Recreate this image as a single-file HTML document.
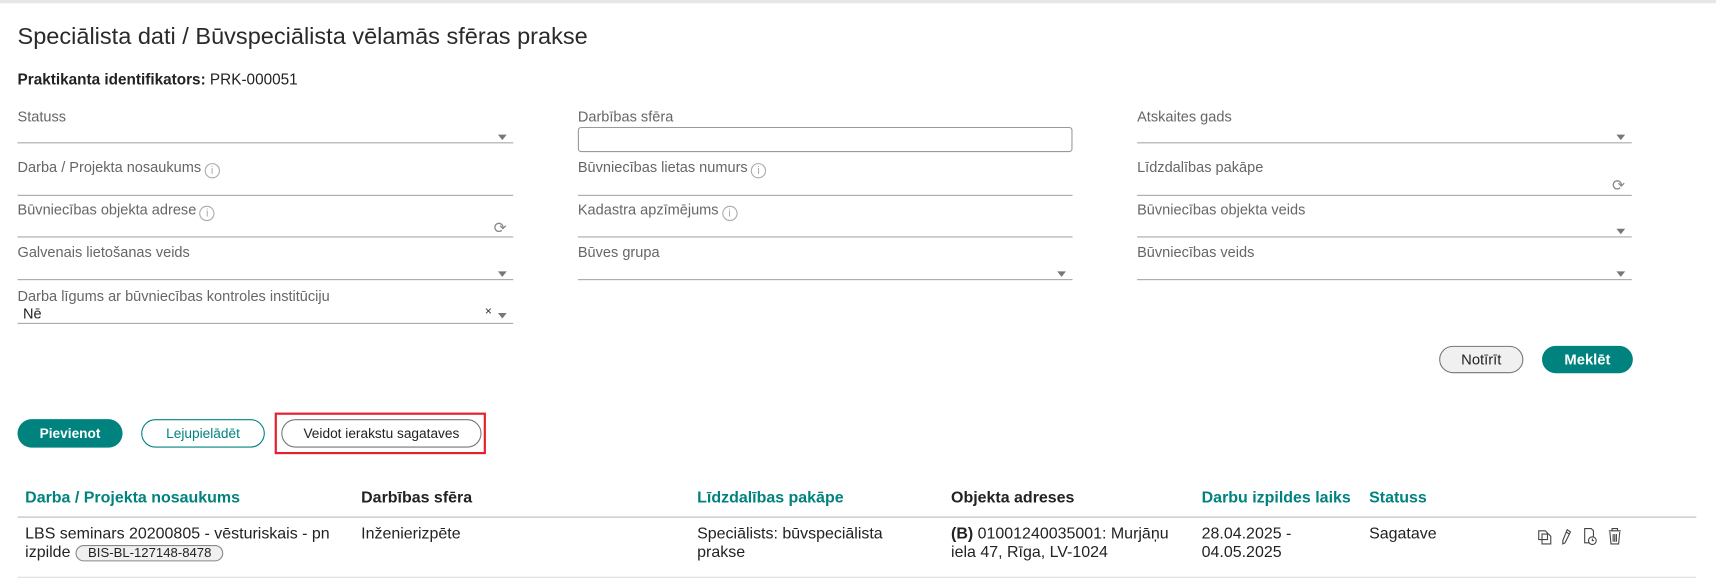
<!DOCTYPE html>
<html><head><meta charset="utf-8">
<style>
html,body{margin:0;padding:0;background:#fff;overflow:hidden;width:1716px;height:578px}
#w{position:absolute;left:0;top:0;width:1568px;height:528px;transform:scale(1.0944);transform-origin:0 0;font-family:"Liberation Sans",Arial,sans-serif;color:#222}
.a{position:absolute;white-space:nowrap}
.lbl{position:absolute;font-size:13.3px;color:#666;line-height:16px;white-space:nowrap}
.ln{position:absolute;height:1px;background:#a8a8a8}
.arr{position:absolute;width:0;height:0;border-left:4px solid transparent;border-right:4px solid transparent;border-top:5px solid #777}
.info{display:inline-block;width:14px;height:14px;border:1px solid #aaa;border-radius:50%;font-size:10px;line-height:13px;text-align:center;color:#aaa;vertical-align:-2px;margin-left:3px;box-sizing:border-box}
.btn{position:absolute;box-sizing:border-box;border-radius:13px;font-size:13px;text-align:center;line-height:23px}
.th{position:absolute;font-size:14.6px;font-weight:bold;white-space:nowrap;top:447px}
.t{color:#00827f}
.td{position:absolute;font-size:14.6px;line-height:17px;top:480px;color:#222;white-space:nowrap}
</style></head><body>
<div id="w">
<div style="position:absolute;left:0;top:0;width:1568px;height:3px;background:#e6e6e6"></div>
<div class="a" style="left:16px;top:21px;font-size:21.5px;color:#2a2a2a">Speciālista dati / Būvspeciālista vēlamās sfēras prakse</div>
<div class="a" style="left:16px;top:64px;font-size:14px"><b>Praktikanta identifikators:</b> PRK-000051</div>

<!-- col1 -->
<div class="lbl" style="left:16px;top:99px">Statuss</div>
<div class="ln" style="left:16px;width:453px;top:130px"></div>
<div class="arr" style="left:455px;top:123px"></div>
<div class="lbl" style="left:16px;top:145px">Darba / Projekta nosaukums<span class="info">i</span></div>
<div class="ln" style="left:16px;width:453px;top:178px"></div>
<div class="lbl" style="left:16px;top:184px">Būvniecības objekta adrese<span class="info">i</span></div>
<div class="a" style="left:451px;top:200px;font-size:14px;color:#888">⟳</div>
<div class="ln" style="left:16px;width:453px;top:216px"></div>
<div class="lbl" style="left:16px;top:223px">Galvenais lietošanas veids</div>
<div class="ln" style="left:16px;width:453px;top:255px"></div>
<div class="arr" style="left:455px;top:248px"></div>
<div class="lbl" style="left:16px;top:263px">Darba līgums ar būvniecības kontroles institūciju</div>
<div class="a" style="left:21px;top:279px;font-size:13.3px">Nē</div>
<div class="a" style="left:443px;top:279px;font-size:11px;color:#333">×</div>
<div class="arr" style="left:455px;top:286px"></div>
<div class="ln" style="left:16px;width:453px;top:295px"></div>

<!-- col2 -->
<div class="lbl" style="left:528px;top:99px">Darbības sfēra</div>
<div style="position:absolute;left:528px;top:116px;width:452px;height:23px;border:1px solid #999;border-radius:3px;box-sizing:border-box"></div>
<div class="lbl" style="left:528px;top:145px">Būvniecības lietas numurs<span class="info">i</span></div>
<div class="ln" style="left:528px;width:452px;top:178px"></div>
<div class="lbl" style="left:528px;top:184px">Kadastra apzīmējums<span class="info">i</span></div>
<div class="ln" style="left:528px;width:452px;top:216px"></div>
<div class="lbl" style="left:528px;top:223px">Būves grupa</div>
<div class="ln" style="left:528px;width:452px;top:255px"></div>
<div class="arr" style="left:966px;top:248px"></div>

<!-- col3 -->
<div class="lbl" style="left:1039px;top:99px">Atskaites gads</div>
<div class="ln" style="left:1039px;width:452px;top:130px"></div>
<div class="arr" style="left:1477px;top:123px"></div>
<div class="lbl" style="left:1039px;top:145px">Līdzdalības pakāpe</div>
<div class="a" style="left:1473px;top:161px;font-size:14px;color:#888">⟳</div>
<div class="ln" style="left:1039px;width:452px;top:178px"></div>
<div class="lbl" style="left:1039px;top:184px">Būvniecības objekta veids</div>
<div class="ln" style="left:1039px;width:452px;top:216px"></div>
<div class="arr" style="left:1477px;top:209px"></div>
<div class="lbl" style="left:1039px;top:223px">Būvniecības veids</div>
<div class="ln" style="left:1039px;width:452px;top:255px"></div>
<div class="arr" style="left:1477px;top:248px"></div>

<div class="btn" style="left:1315px;top:316px;width:77px;height:25px;background:#f0f0f0;border:1px solid #777;color:#222;font-size:13.5px">Notīrīt</div>
<div class="btn" style="left:1409px;top:316px;width:83px;height:25px;background:#00827f;color:#fff;font-weight:bold;line-height:25px;font-size:13.5px">Meklēt</div>

<div class="btn" style="left:16px;top:383px;width:96px;height:26px;background:#00827f;color:#fff;font-weight:bold;line-height:26px;font-size:12.5px">Pievienot</div>
<div class="btn" style="left:129px;top:383px;width:113px;height:26px;border:1px solid #00827f;color:#00827f;font-size:12.5px;line-height:24px">Lejupielādēt</div>
<div style="position:absolute;left:251px;top:377px;width:193px;height:38px;border:2px solid #e4202e;box-sizing:border-box"></div>
<div class="btn" style="left:257px;top:383px;width:183px;height:26px;border:1px solid #777;color:#222;font-size:12.5px;line-height:24px">Veidot ierakstu sagataves</div>

<div class="th t" style="left:23px">Darba / Projekta nosaukums</div>
<div class="th" style="left:330px">Darbības sfēra</div>
<div class="th t" style="left:637px">Līdzdalības pakāpe</div>
<div class="th" style="left:869px">Objekta adreses</div>
<div class="th t" style="left:1098px">Darbu izpildes laiks</div>
<div class="th t" style="left:1251px">Statuss</div>
<div class="ln" style="left:16px;width:1534px;top:472px;background:#bbb"></div>

<div class="td" style="left:23px">LBS seminars 20200805 - vēsturiskais - pn<br>izpilde <span style="display:inline-block;border:1px solid #888;border-radius:8px;background:#f0f0f0;font-size:12px;line-height:13px;padding:0 10px;margin-left:1px">BIS-BL-127148-8478</span></div>
<div class="td" style="left:330px">Inženierizpēte</div>
<div class="td" style="left:637px">Speciālists: būvspeciālista<br>prakse</div>
<div class="td" style="left:869px"><b>(B)</b> 01001240035001: Murjāņu<br>iela 47, Rīga, LV-1024</div>
<div class="td" style="left:1098px">28.04.2025 -<br>04.05.2025</div>
<div class="td" style="left:1251px">Sagatave</div>
<svg style="position:absolute;left:1404px;top:481px" width="80" height="18" viewBox="0 0 80 18" fill="none" stroke="#444" stroke-width="1">
<path d="M2 4h6l2 2v6H2z M5 7h6l2 2v7H5z"/>
<path d="M28 3l3 2-5 10-2 1 0-3z M27 5l3 2"/>
<path d="M44 2h6l2 2v11h-8z"/><circle cx="51" cy="13" r="3.5" fill="#fff"/><path d="M51 11v2h1.5"/>
<path d="M66 4h11 M69 4V2h5v2 M67 5l1 11h7l1-11 M70 7v7 M71.5 7v7 M73 7v7"/>
</svg>
<div class="ln" style="left:16px;width:1534px;top:527px;background:#ddd"></div>
</div>
</body></html>
